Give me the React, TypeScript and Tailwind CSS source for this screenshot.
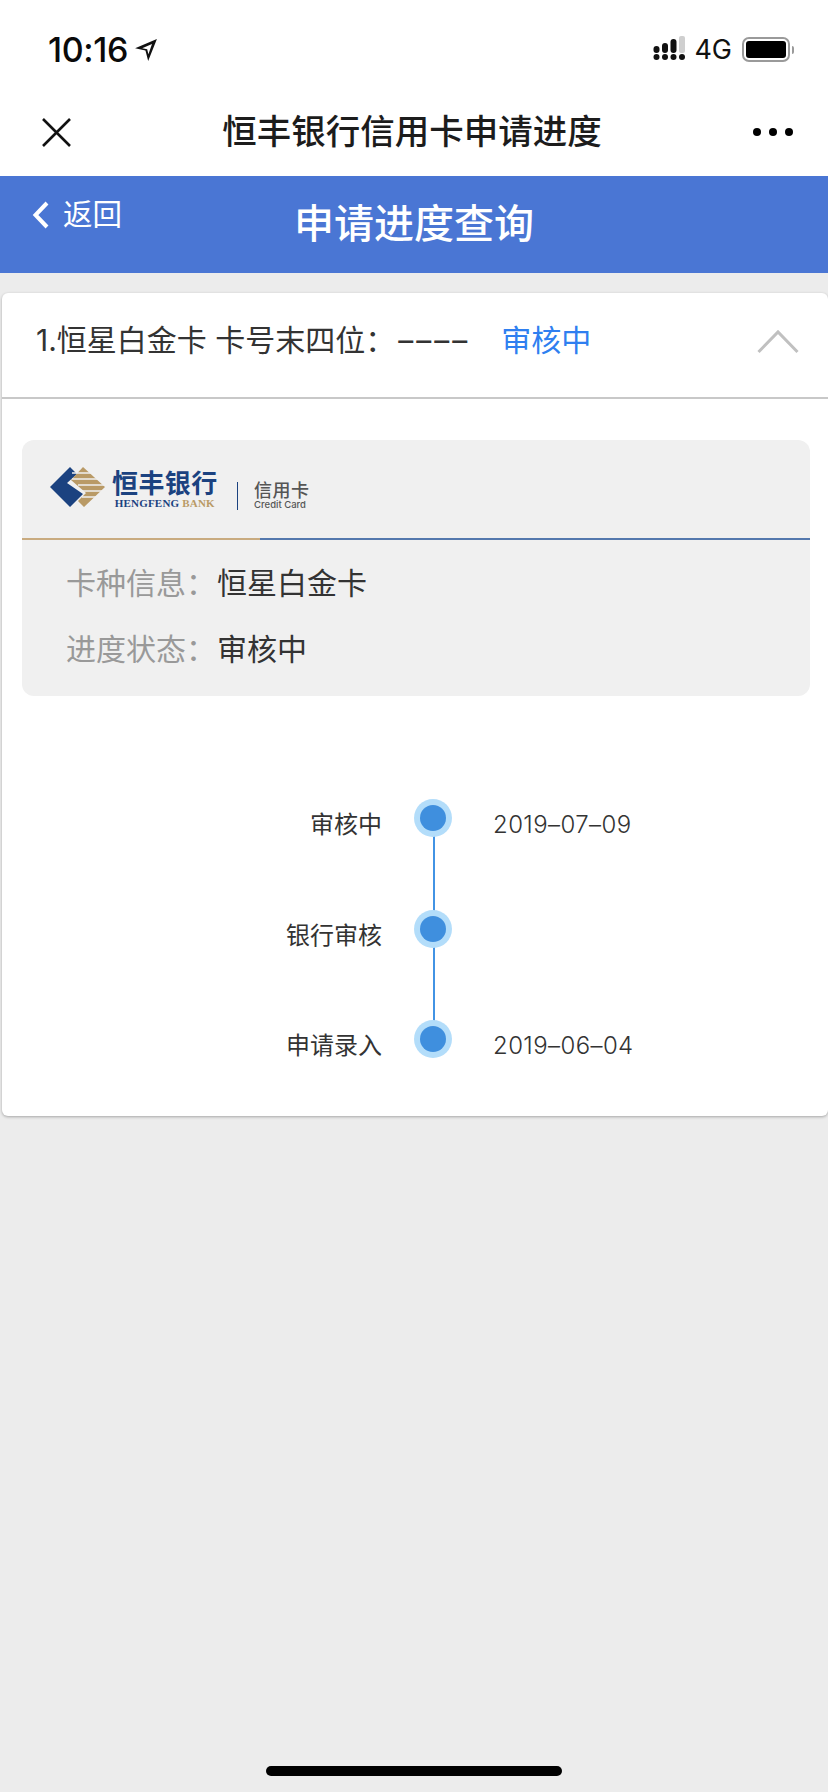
import React from 'react';

const CJK = 'font-["Inter","Noto_Sans_CJK_SC",sans-serif]';

const StatusBar = () => (
  <div className="flex h-[88px] items-center justify-between pr-[34px] pl-[48px] pt-[11px]">
    <div className="flex items-center gap-[6px]">
      <span className="text-[34px] leading-none font-medium tracking-[-0.4px] text-[#0a0a0a]">10:16</span>
      <svg width="24" height="24" viewBox="0 0 22 22">
        <path d="M21 1 1 9.5l9.5 2L13 21z M16.5 5.5 7.5 9.3l4.6 1 1.1 4.7z" fill="#111" fillRule="evenodd" />
      </svg>
    </div>
    <div className="flex items-center gap-[10px]">
      <svg className="mb-[2px] -mr-[3px]" width="34" height="28" viewBox="0 0 34 28">
        <circle cx="3.5" cy="22" r="3" fill="#111" />
        <circle cx="12" cy="22" r="3" fill="#111" />
        <circle cx="20.5" cy="22" r="3" fill="#111" />
        <circle cx="29" cy="22" r="3" fill="#111" />
        <rect x="0.5" y="11" width="6" height="7" rx="3" fill="#111" />
        <rect x="9" y="8" width="6" height="10" rx="3" fill="#111" />
        <rect x="17.5" y="4" width="6" height="14" rx="3" fill="#111" />
        <rect x="26" y="1" width="6" height="17" rx="2" fill="#cfcfcf" />
      </svg>
      <span className="text-[27px] leading-none text-[#111]">4G</span>
      <div className="flex items-center gap-[2px]">
        <div className="h-[25px] w-[48px] rounded-[7px] border-2 border-[#9a9a9a] p-[2px]">
          <div className="h-full w-full rounded-[3px] bg-black" />
        </div>
        <div className="h-[8px] w-[2px] rounded-r-full bg-[#9a9a9a]" />
      </div>
    </div>
  </div>
);

const NavBar = () => (
  <div className="flex h-[88px] items-center justify-between pr-[35px] pl-[41px]">
    <svg width="30" height="30" viewBox="0 0 30 30">
      <path d="M2 2 29 29M29 2 2 29" stroke="#111" strokeWidth="2.6" fill="none" />
    </svg>
    <span className="text-[34.5px] leading-none font-medium text-[#1c1c1c]">恒丰银行信用卡申请进度</span>
    <div className="flex gap-[8px]">
      <span className="h-[8px] w-[8px] rounded-full bg-black" />
      <span className="h-[8px] w-[8px] rounded-full bg-black" />
      <span className="h-[8px] w-[8px] rounded-full bg-black" />
    </div>
  </div>
);

const BlueHeader = () => (
  <div className="relative flex h-[97px] items-center justify-center bg-[#4a76d4] pb-[2px] text-white">
    <div className="absolute top-[24px] left-[32px] flex items-center gap-[13px]">
      <svg width="18" height="28" viewBox="0 0 18 28">
        <path d="M15 2 3.5 14 15 26" stroke="#fff" strokeWidth="4" fill="none" />
      </svg>
      <span className="text-[29.5px] leading-none">返回</span>
    </div>
    <span className="text-[40px] leading-none font-medium">申请进度查询</span>
  </div>
);

const BankLogo = () => (
  <div className="flex h-[98px] items-center pl-[28px]">
    <svg className="mb-[4px]" width="55" height="40" viewBox="0 0 55 40">
      <path d="M0 20 20 0 27 7 17 16 33 27 20 40z" fill="#1b4280" />
      <path d="M33 0 55 20 34 40 28 34 36 26 21 13z" fill="#b99a66" />
      <path d="M22 6H44M22 12H50M28 18H55M32 24H55M32 30H46" stroke="#f0f0f0" strokeWidth="1.5" />
    </svg>
    <div className="ml-[7px] flex flex-col items-center">
      <span className="text-[26px] leading-[28px] font-bold tracking-[0.4px] text-[#1b4280]">恒丰银行</span>
      <span className="font-['Liberation_Serif',serif] text-[11px] leading-[11px] font-bold tracking-[0.2px] text-[#1b4280]">
        HENGFENG <span className="text-[#b99a66]">BANK</span>
      </span>
    </div>
    <div className="mt-[14px] ml-[19px] h-[28px] w-[1.5px] bg-[#1b4280]" />
    <div className="mt-[14px] ml-[16px] flex flex-col">
      <span className="text-[18px] leading-[18px] font-medium tracking-[0.5px] text-[#555]">信用卡</span>
      <span className="text-[9.5px] leading-[10px] font-medium text-[#555]">Credit Card</span>
    </div>
  </div>
);

const CardInfo = () => (
  <div className="h-[256px] rounded-[12px] bg-[#f0f0f0]">
    <BankLogo />
    <div className="flex h-[2px]">
      <div className="w-[238px] bg-[#c9ab80]" />
      <div className="flex-1 bg-[#5478ad]" />
    </div>
    <div className="flex flex-col pt-[10px] pl-[44px] text-[30px] leading-[66px]">
      {[
        ['卡种信息：', '恒星白金卡'],
        ['进度状态：', '审核中'],
      ].map(([label, value]) => (
        <div key={label} className="flex">
          <span className="w-[151px] text-[#999]">{label}</span>
          <span className="text-[#333]">{value}</span>
        </div>
      ))}
    </div>
  </div>
);

const steps = [
  { name: '审核中', date: '2019–07–09' },
  { name: '银行审核', date: '' },
  { name: '申请录入', date: '2019–06–04' },
];

const Timeline = () => (
  <div className="flex flex-col pt-[103px]">
    {steps.map((step, i) => (
      <div key={step.name} className="flex h-[110.5px] text-[24px] leading-none text-[#333]">
        <span className="w-[360px] pt-[14px] text-right">{step.name}</span>
        <div className="relative ml-[32px] w-[38px]">
          {i < steps.length - 1 && (
            <div className="absolute top-[20px] left-[19px] h-[110px] w-[2px] bg-[#4293e4]" />
          )}
          <div className="relative h-[38px] w-[38px] rounded-full bg-[#b3ddfa] p-[6px]">
            <div className="h-[26px] w-[26px] rounded-full bg-[#3f8fde]" />
          </div>
        </div>
        <span className="ml-[41px] pt-[14px] font-light tracking-[0.4px]">{step.date}</span>
      </div>
    ))}
  </div>
);

const ProgressCard = () => (
  <div className="ml-[2px] h-[823px] rounded-[6px] bg-white shadow-[0_1px_3px_rgba(0,0,0,0.3)]">
    <div className="flex h-[106px] items-center border-b-2 border-[#c8c8c8] pb-[11px] pl-[34px] text-[30px] leading-none">
      <span className="text-[#333]">
        1.恒星白金卡 卡号末四位：<span className="ml-[3px] tracking-[3px]">––––</span>
      </span>
      <span className="ml-[31px] text-[#2f7ff0]">审核中</span>
      <svg className="mt-[3px] mr-[29px] ml-auto" width="42" height="26" viewBox="0 0 42 26">
        <path d="M1.5 24 21 4 40.5 24" stroke="#c0c0c0" strokeWidth="3" fill="none" />
      </svg>
    </div>
    <div className="pt-[41px] pr-[18px] pl-[20px]">
      <CardInfo />
      <Timeline />
    </div>
  </div>
);

export default function App() {
  return (
    <div className={`relative flex h-[1792px] w-[828px] flex-col overflow-hidden bg-[#ececec] ${CJK}`}>
      <div className="bg-white">
        <StatusBar />
        <NavBar />
      </div>
      <BlueHeader />
      <div className="pt-[20px]">
        <ProgressCard />
      </div>
      <div className="absolute bottom-[16px] left-[266px] h-[10px] w-[296px] rounded-full bg-black" />
    </div>
  );
}
